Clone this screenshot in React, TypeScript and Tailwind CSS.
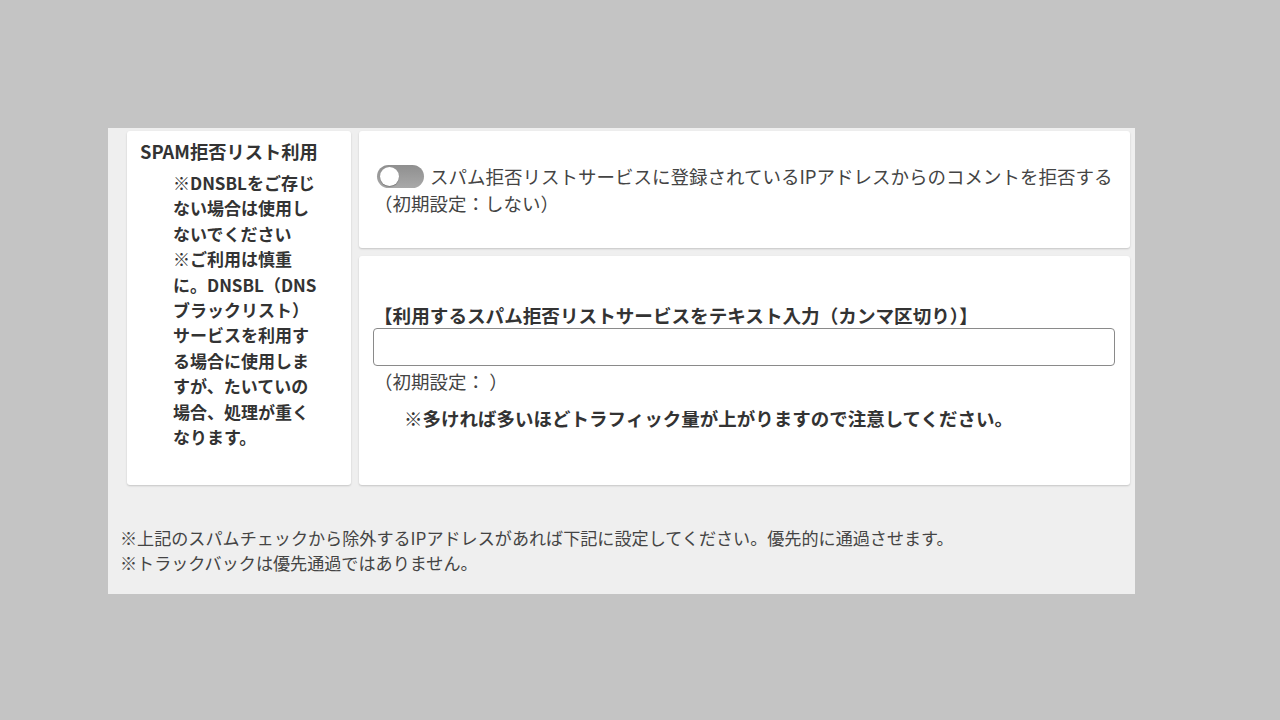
import React from "react";

// ── トグルスイッチ（オフ状態） ─────────────────────────────────────────────
function Toggle() {
  return (
    <span className="inline-flex align-middle mr-[6px] ml-[3px] w-[47px] h-[23px] rounded-full bg-gradient-to-b from-[#8f8f8f] to-[#a9a9a9] items-center pl-[3px] relative -top-[2px]">
      <span className="w-[19px] h-[19px] rounded-full bg-white shadow-[0_1px_1px_rgba(0,0,0,0.25)]" />
    </span>
  );
}

const card = "bg-white rounded-[3px] shadow-[0_1px_2px_rgba(0,0,0,0.18)]";

export default function App() {
  return (
    <div
      className="min-h-[720px] bg-[#c4c4c4] pt-[128px] pl-[108px]"
      style={{ fontFamily: '"Noto Sans CJK JP", "Noto Sans", sans-serif' }}
    >
      <div className="w-[1027px] h-[466px] bg-[#efefef]">
        <div className="flex gap-[8px] pl-[19px] pt-[3px]">
          {/* 左：項目名 */}
          <div className={`${card} w-[224px] h-[354px] pl-[13px] pt-[7px]`}>
            <div className="text-[18.3px] leading-[27px] font-bold text-[#333]">
              SPAM拒否リスト利用
            </div>
            <div className="mt-[5px] ml-[33px] w-[145px] text-[17px] leading-[25.4px] font-bold text-[#333]">
              ※DNSBLをご存じない場合は使用しないでください
              <br />
              ※ご利用は慎重に。DNSBL（DNSブラックリスト）サービスを利用する場合に使用しますが、たいていの場合、処理が重くなります。
            </div>
          </div>

          {/* 右：設定欄 */}
          <div className="w-[771px] flex flex-col gap-[8px]">
            <div className={`${card} h-[117px] px-[15px] pt-[32px] text-[18.5px] leading-[27px] text-[#444]`}>
              <div className="whitespace-nowrap">
                <Toggle />
                スパム拒否リストサービスに登録されているIPアドレスからのコメントを拒否する
              </div>
              <div>（初期設定：しない）</div>
            </div>

            <div className={`${card} h-[229px] px-[15px] pt-[45px] text-[18.5px] leading-[27px] text-[#444]`}>
              <div className="font-bold text-[#333] text-[18.6px] whitespace-nowrap">
                【利用するスパム拒否リストサービスをテキスト入力（カンマ区切り）】
              </div>
              <input
                type="text"
                className="block w-[742px] h-[38px] -ml-[1px] border border-[#8a8a8a] rounded-[4px] bg-white px-2 outline-none"
              />
              <div className="mt-[2px]">（初期設定： ）</div>
              <div className="mt-[10px] pl-[30px] font-bold text-[#333]">
                ※多ければ多いほどトラフィック量が上がりますので注意してください。
              </div>
            </div>
          </div>
        </div>

        <div className="mt-[40px] pl-[12px] text-[17.1px] leading-[25px] text-[#444]">
          <div>※上記のスパムチェックから除外するIPアドレスがあれば下記に設定してください。優先的に通過させます。</div>
          <div>※トラックバックは優先通過ではありません。</div>
        </div>
      </div>
    </div>
  );
}
